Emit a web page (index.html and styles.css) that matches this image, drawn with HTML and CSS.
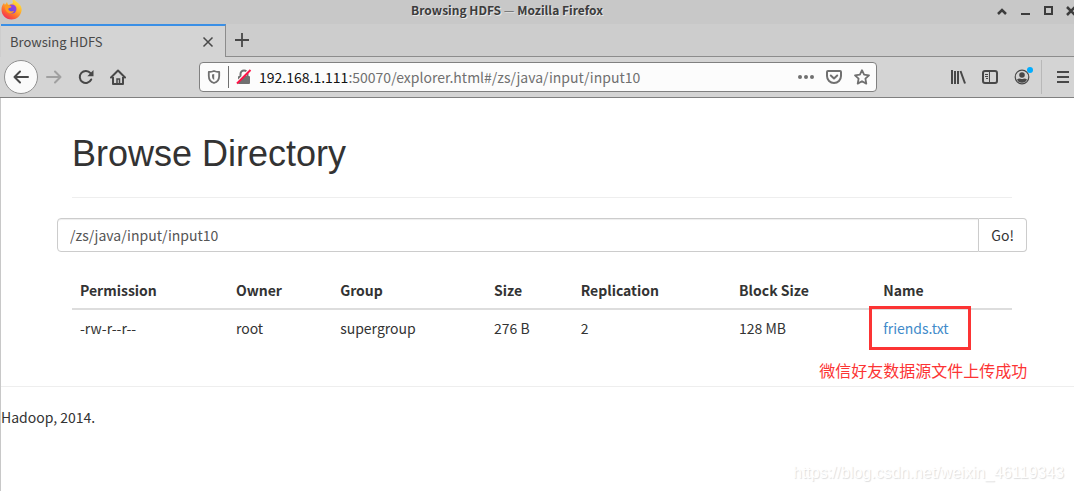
FILE: index.html
```html
<!DOCTYPE html>
<html lang="en">

<head>
    <meta charset="UTF-8">
    <meta name="viewport" content="width=device-width, initial-scale=1.0">
    <title>Browsing HDFS</title>
    <link rel="stylesheet" href="styles.css">
</head>

<body>

    <!-- Window title bar -->
    <header class="titlebar">
        <svg class="firefox" viewBox="0 0 24 24" width="24" height="24">
            <defs>
                <linearGradient id="fox" x1="0.8" y1="0" x2="0.2" y2="1">
                    <stop offset="0" stop-color="#fff04a" />
                    <stop offset="0.4" stop-color="#ffb42c" />
                    <stop offset="0.7" stop-color="#ff6a30" />
                    <stop offset="1" stop-color="#f0245f" />
                </linearGradient>
                <linearGradient id="globe" x1="0" y1="1" x2="1" y2="0">
                    <stop offset="0" stop-color="#5a54d8" />
                    <stop offset="1" stop-color="#a33ce8" />
                </linearGradient>
            </defs>
            <path d="M13 -1c1 2 3 3 5 5c3 2 4 5 3.500 8c-1 5-5 8.500-10 8.500c-6 0-10-4.500-10-10c0-3 1-5 2.500-6.500l1 2l2-3l1 3c2-1 4-1 5-2c-.5-2-.5-3 0-5z" fill="url(#fox)" />
            <circle cx="12" cy="10" r="4.500" fill="url(#globe)" />
            <path d="M5 6c2-1 4 0 6 1c1 1 0 2-2 2c-1 1-1 2 1 3c1 1 3 0 4 0c-1 3-5 3-7 1c-2-2-2-4-2-7z" fill="#ff9a20" />
        </svg>
        <span class="window-title">Browsing HDFS <span class="dash">—</span> Mozilla Firefox</span>
        <div class="window-buttons">
            <button aria-label="Roll up"><svg width="10" height="10"><path d="M1 8l4-4 4 4" fill="none" stroke="#3c3c3c" stroke-width="2.500" /></svg></button>
            <button aria-label="Minimize"><svg width="10" height="10"><path d="M1 8h9" stroke="#3c3c3c" stroke-width="2" /></svg></button>
            <button aria-label="Maximize"><svg width="10" height="10"><path d="M2 1h7v7h-7z" fill="none" stroke="#3c3c3c" stroke-width="2" /></svg></button>
            <button aria-label="Close"><svg width="10" height="10"><path d="M1 1l8 8M9 1l-8 8" stroke="#3c3c3c" stroke-width="2.500" /></svg></button>
        </div>
    </header>

    <div class="tabs">
        <div class="tab">
            <span>Browsing HDFS</span>
            <button aria-label="Close tab"><svg width="12" height="12"><path d="M1.500 1.500l9 9M10.500 1.500l-9 9" stroke="#484848" stroke-width="1.500" /></svg></button>
        </div>
        <div class="tab-rest">
            <button aria-label="New tab"><svg width="14" height="14"><path d="M7 0v14M0 7h14" stroke="#484848" stroke-width="1.800" /></svg></button>
        </div>
    </div>

    <nav class="toolbar">
        <button class="back" aria-label="Back">
            <svg width="16" height="16" fill="none" stroke="#484848" stroke-width="2" stroke-linecap="round" stroke-linejoin="round"><path d="M15 8H1.500M7 2.500L1.500 8L7 13.500" /></svg>
        </button>
        <button class="forward" aria-label="Forward">
            <svg width="16" height="16" fill="none" stroke="#a0a0a0" stroke-width="2" stroke-linecap="round" stroke-linejoin="round"><path d="M1 8h13.500M9 2.500L14.500 8L9 13.500" /></svg>
        </button>
        <button class="reload" aria-label="Reload">
            <svg width="16" height="16"><path d="M13.200 10.500A6 6 0 1 1 12.500 4.200" fill="none" stroke="#484848" stroke-width="2" stroke-linecap="round" /><path d="M15.500 1v6.200h-6.200z" fill="#484848" /></svg>
        </button>
        <button class="home" aria-label="Home">
            <svg width="16" height="16" fill="none" stroke="#484848" stroke-width="2"><path d="M1 8.500L8 1.500l7 7" stroke-linecap="round" stroke-linejoin="round" /><path d="M3 8v7h10V8" stroke-linejoin="round" /><path d="M7 15v-5h2.500v5" stroke-width="1.500" /></svg>
        </button>

        <div class="urlbar">
            <svg width="14" height="14" fill="none" stroke="#707070"><path d="M7 1c2 .8 4 1 5.200 1v4c0 4-2.500 6.200-5.200 7C4.300 12.200 1.800 10 1.800 6V2C3 2 5 1.800 7 1z" stroke-width="1.800" stroke-linejoin="round" /><path d="M7.200 4v6c-1.500-.8-2.200-2-2.200-4V4.500z" fill="#707070" stroke="none" /></svg>
            <span class="divider"></span>
            <svg class="lock" width="16" height="16"><path d="M4.500 7V5a3.500 3.500 0 0 1 7 0v2" fill="none" stroke="#707070" stroke-width="2" /><rect x="2" y="7" width="12" height="8" rx="1" fill="#707070" /><path d="M1 13L13 1" stroke="#fcfcfc" stroke-width="2" /><path d="M1 14.500L14.500 1" stroke="#ff1246" stroke-width="2" /></svg>
            <span class="url"><b>192.168.1.111</b>:50070/explorer.html#/zs/java/input/input10</span>
            <div class="url-actions">
                <button aria-label="Page actions"><svg width="16" height="16" fill="#707070"><circle cx="2" cy="8" r="2" /><circle cx="8" cy="8" r="2" /><circle cx="14" cy="8" r="2" /></svg></button>
                <button aria-label="Save to Pocket"><svg width="16" height="16" fill="none" stroke="#707070" stroke-width="2" stroke-linecap="round" stroke-linejoin="round"><path d="M2 2h12q1 0 1 1v4a7 7 0 0 1-14 0V3q0-1 1-1z" /><path d="M4.800 6.500L8 9.500l3.200-3" /></svg></button>
                <button aria-label="Bookmark"><svg width="16" height="16" fill="none" stroke="#707070" stroke-width="1.800" stroke-linejoin="round"><path d="M8 1.200l2.100 4.500 4.900.6-3.600 3.300.9 5L8 12.200l-4.300 2.400.9-5L1 6.300l4.900-.6z" /></svg></button>
            </div>
        </div>

        <div class="tools">
            <button aria-label="Library"><svg width="16" height="16" stroke="#484848" stroke-width="2"><path d="M2 1v14M5 2v13M8 2v13" /><path d="M10.500 2L15 14.500" /></svg></button>
            <button aria-label="Sidebars"><svg width="16" height="16" fill="none" stroke="#484848"><rect x="1" y="2" width="14" height="12" rx="2" stroke-width="2" /><path d="M7.500 2v12" stroke-width="1" /><path d="M3 5.500h3M3 7.500h3M4 9.500h2" stroke-width="1" /></svg></button>
            <button class="account" aria-label="Account"><svg width="16" height="16"><circle cx="8" cy="8" r="6.800" fill="none" stroke="#484848" stroke-width="1.200" /><circle cx="8" cy="6" r="2.800" fill="#484848" /><path d="M3 10.500q1-1 3-1q2 1 4 0q2 0 3 1a5.500 5.500 0 0 1-10 0z" fill="#484848" /></svg></button>
        </div>
        <button class="menu" aria-label="Menu"><svg width="12" height="14"><path d="M0 2h12M0 7h12M0 12h12" stroke="#484848" stroke-width="2" /></svg></button>
    </nav>

    <div class="page">
        <main class="container">
            <div class="page-header">
                <h1>Browse Directory</h1>
            </div>

            <form class="input-group">
                <input type="text" aria-label="Directory" value="/zs/java/input/input10">
                <button type="button">Go!</button>
            </form>

            <table>
                <thead>
                    <tr>
                        <th>Permission</th>
                        <th>Owner</th>
                        <th>Group</th>
                        <th>Size</th>
                        <th>Replication</th>
                        <th>Block Size</th>
                        <th>Name</th>
                    </tr>
                </thead>
                <tbody>
                    <tr>
                        <td>-rw-r--r--</td>
                        <td>root</td>
                        <td>supergroup</td>
                        <td>276 B</td>
                        <td>2</td>
                        <td>128 MB</td>
                        <td>
                            <div class="marked">
                                <a href="#">friends.txt</a>
                                <span class="mark"></span>
                                <span class="note" lang="zh">微信好友数据源文件上传成功</span>
                            </div>
                        </td>
                    </tr>
                </tbody>
            </table>
        </main>

        <hr>
        <footer>Hadoop, 2014.</footer>
        <div class="watermark">https://blog.csdn.net/weixin_46119343</div>
    </div>

</body>

</html>
```
FILE: styles.css
```css
* {
    box-sizing: border-box;
}

body {
    margin: 0;
    min-height: 100vh;
    display: flex;
    flex-direction: column;
    overflow-x: hidden;
    font-family: "Noto Sans CJK SC", sans-serif;
    font-size: 14px;
    line-height: 20px;
    color: #333;
    background: #fff;
}

button {
    padding: 0;
    border: 0;
    background: none;
    font: inherit;
    color: inherit;
}

svg {
    display: block;
    flex: none;
}

/* Browser window */
.titlebar {
    position: relative;
    display: flex;
    align-items: center;
    justify-content: center;
    height: 24px;
    padding: 0 60px 4px 0;
    overflow: hidden;
    background: #c8c8c8;
}

.firefox {
    position: absolute;
    left: 0;
    top: -1px;
}

.window-title {
    font-size: 12px;
    font-weight: bold;
    color: #3c3c3c;
    text-shadow: 1px 1px 0 #e8e8e8;
}

.dash {
    font-weight: 300;
}

.window-buttons {
    position: absolute;
    right: -2px;
    top: 6px;
    display: flex;
    gap: 13px;
}

.tabs {
    display: flex;
    height: 33px;
    padding-left: 1px;
    background: #cdcdcd;
}

.tab {
    display: flex;
    align-items: center;
    justify-content: space-between;
    width: 225px;
    padding: 0 11px 0 9px;
    border-top: 2px solid #3a8fe6;
    border-right: 1px solid #8c8c8c;
    background: #d4d4d4;
    font-size: 13px;
    color: #484848;
}

.tab-rest {
    display: flex;
    flex: 1;
    align-items: center;
    padding-left: 9px;
    border-bottom: 1px solid #8c8c8c;
}

.toolbar {
    display: flex;
    align-items: center;
    height: 41px;
    padding-left: 4px;
    border-bottom: 1px solid #808080;
    background: #d4d4d4;
}

.back {
    display: flex;
    align-items: center;
    justify-content: center;
    width: 34px;
    height: 34px;
    border: 1px solid #909090;
    border-radius: 50%;
    background: #fafafa;
}

.forward {
    margin-left: 8px;
}

.reload,
.home {
    margin-left: 16px;
}

.urlbar {
    display: flex;
    flex: 1;
    align-items: center;
    height: 30px;
    margin-left: 73px;
    padding: 0 6px 0 7px;
    border: 1px solid #808080;
    border-radius: 4px;
    background: #fcfcfc;
}

.divider {
    width: 1px;
    height: 22px;
    margin: 0 7px;
    background: #707070;
}

.url {
    flex: 1;
    margin-left: 7px;
    color: #707070;
}

.url b {
    font-weight: normal;
    color: #111;
}

.url-actions {
    display: flex;
    gap: 12px;
}

.tools {
    display: flex;
    gap: 16px;
    margin-left: 73px;
}

.account {
    position: relative;
}

.account::after {
    content: "";
    position: absolute;
    top: -2px;
    right: -3px;
    width: 6px;
    height: 6px;
    border-radius: 50%;
    background: #00adff;
}

.menu {
    height: 34px;
    margin-left: 11px;
    padding: 0 5px 0 15px;
    border-left: 1px solid #b8b8b8;
}

/* Page content */
.page {
    position: relative;
    flex: 1;
    border-left: 1px solid #c8c8c8;
}

.container {
    max-width: 979px;
    margin: 0 auto;
    padding-left: 9px;
}

.page-header {
    margin: 0 15px 20px;
    padding: 36px 0 13px;
    border-bottom: 1px solid #eee;
}

h1 {
    margin: 0;
    padding-bottom: 10px;
    font-family: "Liberation Sans", Arial, sans-serif;
    font-size: 36px;
    font-weight: normal;
    line-height: 40px;
}

.input-group {
    display: flex;
    height: 34px;
    margin-bottom: 20px;
}

.input-group input {
    flex: 1;
    min-width: 0;
    padding: 6px 12px;
    border: 1px solid #ccc;
    border-radius: 4px 0 0 4px;
    box-shadow: inset 0 1px 1px #eee;
    font: inherit;
    color: #555;
}

.input-group button {
    padding: 0 12px;
    border: 1px solid #ccc;
    border-left: 0;
    border-radius: 0 4px 4px 0;
    background: #fff;
}

table {
    width: calc(100% - 30px);
    margin: 0 15px 40px;
    border-collapse: separate;
    border-spacing: 0;
}

th,
td {
    padding: 8px;
    text-align: left;
}

th {
    border-bottom: 2px solid #ddd;
}

a {
    color: #428bca;
    text-decoration: none;
}

.marked {
    position: relative;
}

.mark {
    position: absolute;
    top: -12px;
    left: -14px;
    width: 102px;
    height: 44px;
    border: 3px solid #fc3434;
}

.note {
    position: absolute;
    top: 42px;
    left: -64px;
    font-size: 16px;
    white-space: nowrap;
    color: #fc3434;
}

hr {
    margin: 20px 0;
    border: 0;
    border-top: 1px solid #eee;
}

.watermark {
    position: absolute;
    right: 10px;
    bottom: 8px;
    font-family: "Liberation Sans", Arial, sans-serif;
    font-size: 16px;
    color: #fff;
    text-shadow: 1px 1px 1px #ddd;
}
```
